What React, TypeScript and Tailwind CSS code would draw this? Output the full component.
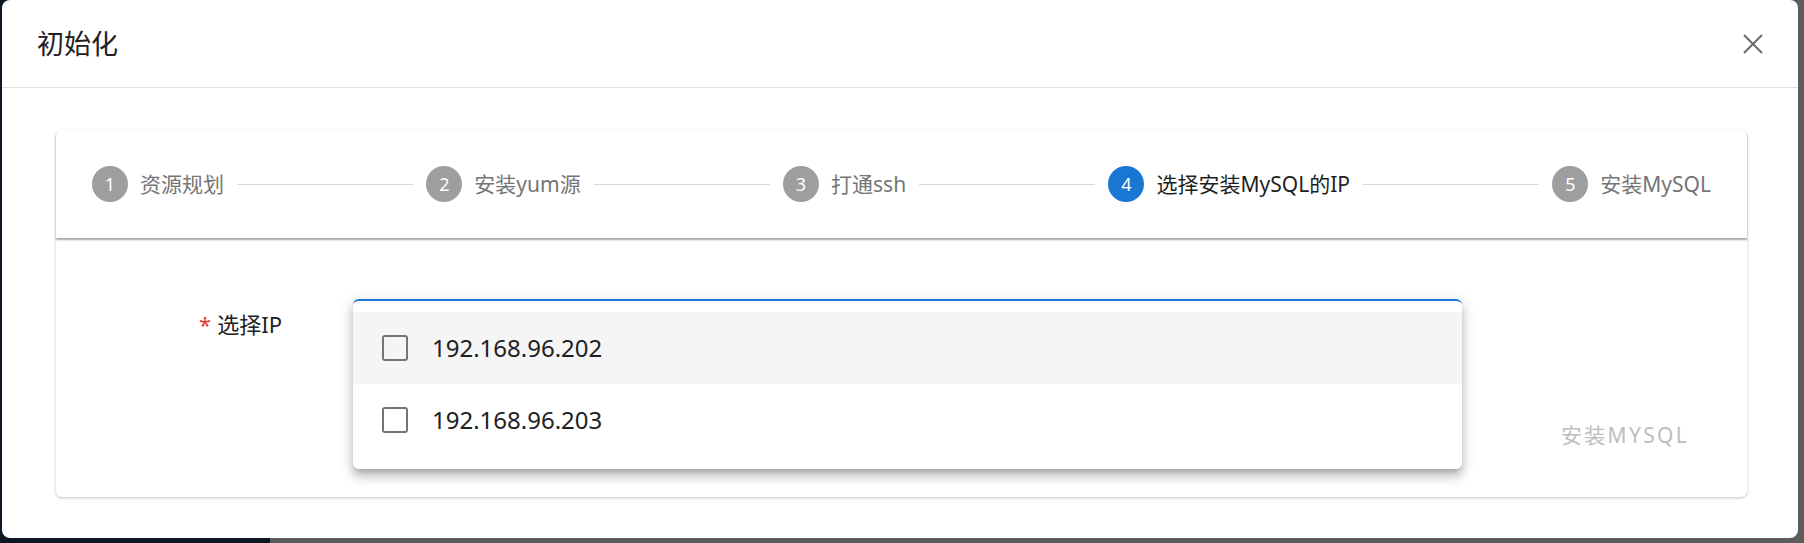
import { Fragment } from "react"

const steps = [
  { n: 1, label: "资源规划" },
  { n: 2, label: "安装yum源" },
  { n: 3, label: "打通ssh" },
  { n: 4, label: "选择安装MySQL的IP" },
  { n: 5, label: "安装MySQL" },
]

const ips = ["192.168.96.202", "192.168.96.203"]

function Step({ n, label, active }: { n: number; label: string; active: boolean }) {
  return (
    <div className="flex items-center gap-3 shrink-0">
      <div
        className={
          "flex h-9 w-9 items-center justify-center rounded-full text-[18px] text-white " +
          (active ? "bg-[#1976d2]" : "bg-[#9e9e9e]")
        }
      >
        {n}
      </div>
      <span className={"text-[21px] leading-[30px] " + (active ? "text-[#1f1f1f]" : "text-[#757575]")}>
        {label}
      </span>
    </div>
  )
}

export default function App() {
  return (
    <div className="h-[543px] w-full overflow-hidden bg-[linear-gradient(to_right,#0e1824_270px,#5c5c5c_270px)] font-['Noto_Sans','Noto_Sans_CJK_SC',sans-serif]">
      <div className="ml-[2px] mr-[6px] h-[538px] rounded-lg bg-white">
        {/* header */}
        <div className="flex h-[88px] items-center justify-between border-b border-[#e0e0e0] pl-[35px] pr-[35px]">
          <h1 className="text-[27px] leading-none text-[#212121]">初始化</h1>
          <svg width="20" height="20" viewBox="0 0 20 20" className="text-[#6b6b6b]">
            <path d="M1 1 L19 19 M19 1 L1 19" stroke="currentColor" strokeWidth="2" />
          </svg>
        </div>

        {/* body */}
        <div className="ml-[54px] mr-[51px] mt-[42px] rounded-md bg-white shadow-[0_1px_3px_rgba(0,0,0,0.25)]">
          <div className="flex h-[108px] items-center rounded-t-md px-[36px] shadow-[0_2px_2px_rgba(0,0,0,0.35)]">
            {steps.map((s, i) => (
              <Fragment key={s.n}>
                <Step n={s.n} label={s.label} active={s.n === 4} />
                {i < steps.length - 1 && <div className="mx-[13px] h-px flex-1 bg-[#d9d9d9]" />}
              </Fragment>
            ))}
          </div>

          <div className="flex pt-[61px]">
            <div className="w-[226px] pt-[10px] text-right text-[22px] leading-[30px] text-[#212121]">
              <span className="mr-[6px] text-[#e53935]">*</span>选择IP
            </div>
            <div className="relative ml-[71px] mr-[285px] h-[56px] flex-1">
              <div className="absolute left-0 right-0 top-0 z-10 rounded-md border-t-2 border-[#1976d2] bg-white pb-[13px] pt-[11px] shadow-[0_5px_5px_-3px_rgba(0,0,0,0.2),0_8px_10px_1px_rgba(0,0,0,0.14),0_3px_14px_2px_rgba(0,0,0,0.12)]">
                {ips.map((ip, i) => (
                  <div
                    key={ip}
                    className={"flex h-[72px] items-center pl-[29px] " + (i === 0 ? "bg-[#f5f5f5]" : "")}
                  >
                    <div className="h-[26px] w-[26px] rounded-[3px] border-[2.5px] border-[#757575]" />
                    <span className="ml-[24px] text-[24px] text-[#212121]">{ip}</span>
                  </div>
                ))}
              </div>
            </div>
          </div>

          <div className="flex justify-end pb-[47px] pr-[58px] pt-[65px]">
            <span className="text-[21px] leading-[30px] tracking-[0.11em] text-[#bdbdbd]">安装MYSQL</span>
          </div>
        </div>
      </div>
    </div>
  )
}
